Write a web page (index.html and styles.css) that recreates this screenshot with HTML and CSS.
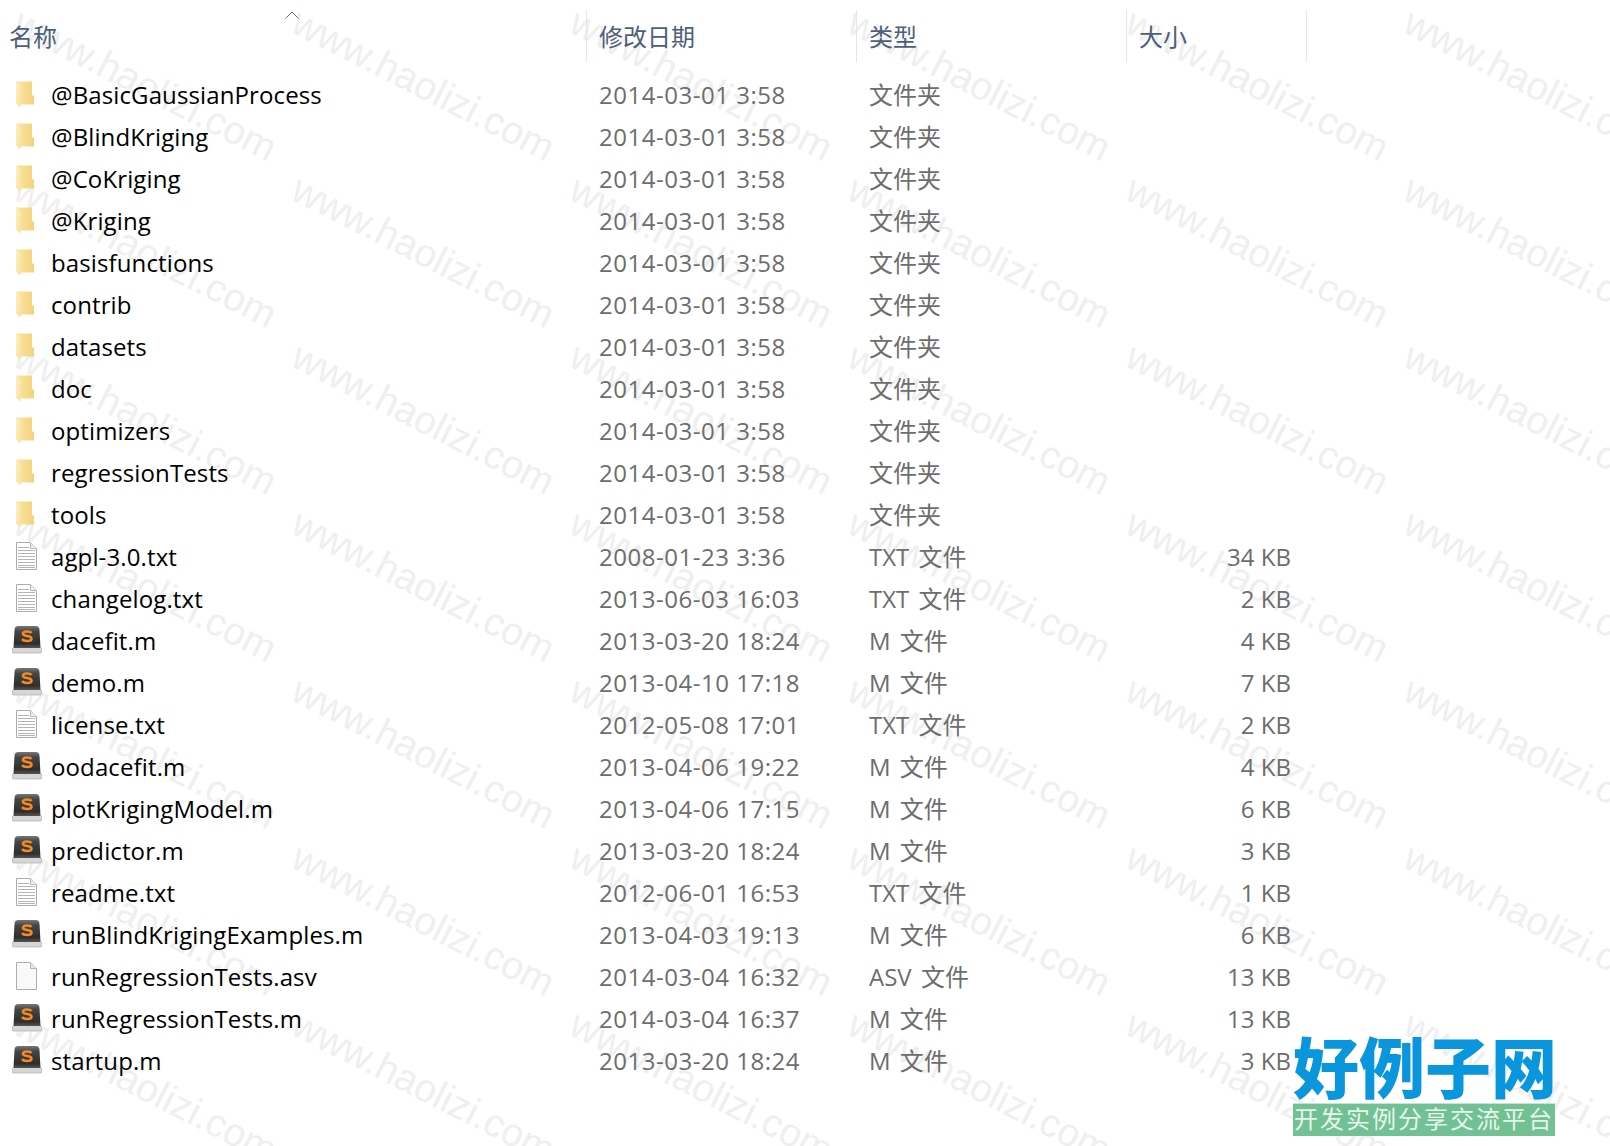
FILE: index.html
```html
<!DOCTYPE html>
<html lang="zh-CN">
<head>
  <meta charset="UTF-8">
  <title>dace</title>
  <link rel="stylesheet" href="styles.css">
</head>
<body>

  <svg class="defs" width="0" height="0">
    <defs>
      <linearGradient id="folderBack" x1="0" y1="0" x2="1" y2="0">
        <stop offset="0" stop-color="#fbe6a6"/>
        <stop offset="1" stop-color="#f3d27a"/>
      </linearGradient>
      <linearGradient id="folderFront" x1="0" y1="0" x2="1" y2="1">
        <stop offset="0" stop-color="#fdf0c4"/>
        <stop offset="1" stop-color="#f8e09a"/>
      </linearGradient>
      <linearGradient id="slBody" x1="0" y1="0" x2="0" y2="1">
        <stop offset="0" stop-color="#777"/>
        <stop offset=".25" stop-color="#444"/>
        <stop offset=".8" stop-color="#2e2e2e"/>
        <stop offset="1" stop-color="#555"/>
      </linearGradient>
      <symbol id="folder" viewBox="0 0 30 32">
        <path d="M4 2.500h16v14h2v9H8L4 22z" fill="url(#folderBack)"/>
        <path d="M4 2.500l5 4.500v19l-1 2.500-4-4z" fill="url(#folderFront)"/>
      </symbol>
      <symbol id="txt" viewBox="0 0 30 32">
        <path d="M4.500 1.500h14l6 6v21h-20z" fill="#fff" stroke="#adadad"/>
        <path d="M18.500 1.500v6h6" fill="#eee" stroke="#b8b8b8"/>
        <path d="M6 6.500h11M6 9.500h17M6 12.500h17M6 15.500h17M6 18.500h17M6 21.500h17M6 24.500h17M6 26.500h17" stroke="#b4b4b4" fill="none"/>
      </symbol>
      <symbol id="blank" viewBox="0 0 30 32">
        <path d="M4.500 1.500h14l6 6v21h-20z" fill="#f8f9fb" stroke="#adadad"/>
        <path d="M18.500 1.500v6h6" fill="#e6e6e6" stroke="#b8b8b8"/>
      </symbol>
      <symbol id="sublime" viewBox="0 0 30 32">
        <path d="M0 24l2-2h26l2 2v3l-1 1H1l-1-1z" fill="#d6d6d6" stroke="#a6a6a6" stroke-width=".6"/>
        <path d="M2.500 5q0-4 4-4h17q4 0 4 4l1 18H1.500z" fill="url(#slBody)"/>
        <path d="M19.500 8q-1-1.500-4.500-1.500-4 0-4 2.300 0 1.800 4 2.200 4.500.5 4.500 2.700 0 2.300-4.500 2.300-3.500 0-5-1.800" fill="none" stroke="#f58a20" stroke-width="2.600"/>
      </symbol>
    </defs>
  </svg>

  <div class="watermark">
    <span>www.haolizi.com</span><span>www.haolizi.com</span><span>www.haolizi.com</span><span>www.haolizi.com</span><span>www.haolizi.com</span><span>www.haolizi.com</span>
    <span>www.haolizi.com</span><span>www.haolizi.com</span><span>www.haolizi.com</span><span>www.haolizi.com</span><span>www.haolizi.com</span><span>www.haolizi.com</span>
    <span>www.haolizi.com</span><span>www.haolizi.com</span><span>www.haolizi.com</span><span>www.haolizi.com</span><span>www.haolizi.com</span><span>www.haolizi.com</span>
    <span>www.haolizi.com</span><span>www.haolizi.com</span><span>www.haolizi.com</span><span>www.haolizi.com</span><span>www.haolizi.com</span><span>www.haolizi.com</span>
    <span>www.haolizi.com</span><span>www.haolizi.com</span><span>www.haolizi.com</span><span>www.haolizi.com</span><span>www.haolizi.com</span><span>www.haolizi.com</span>
    <span>www.haolizi.com</span><span>www.haolizi.com</span><span>www.haolizi.com</span><span>www.haolizi.com</span><span>www.haolizi.com</span><span>www.haolizi.com</span>
    <span>www.haolizi.com</span><span>www.haolizi.com</span><span>www.haolizi.com</span><span>www.haolizi.com</span><span>www.haolizi.com</span><span>www.haolizi.com</span>
  </div>

  <div class="explorer">
    <div class="header">
      <div class="col-head col-name">名称<svg class="sort" width="14" height="8" viewBox="0 0 14 8"><path d="M.5 7.500L7 1l6.500 6.500" fill="none" stroke="#6d7680"/></svg></div>
      <div class="col-head">修改日期</div>
      <div class="col-head">类型</div>
      <div class="col-head">大小</div>
    </div>

    <div class="row"><div class="name"><svg class="icon"><use href="#folder"/></svg>@BasicGaussianProcess</div><div class="cell">2014-03-01 3:58</div><div class="cell type">文件夹</div><div class="size"></div></div>
    <div class="row"><div class="name"><svg class="icon"><use href="#folder"/></svg>@BlindKriging</div><div class="cell">2014-03-01 3:58</div><div class="cell type">文件夹</div><div class="size"></div></div>
    <div class="row"><div class="name"><svg class="icon"><use href="#folder"/></svg>@CoKriging</div><div class="cell">2014-03-01 3:58</div><div class="cell type">文件夹</div><div class="size"></div></div>
    <div class="row"><div class="name"><svg class="icon"><use href="#folder"/></svg>@Kriging</div><div class="cell">2014-03-01 3:58</div><div class="cell type">文件夹</div><div class="size"></div></div>
    <div class="row"><div class="name"><svg class="icon"><use href="#folder"/></svg>basisfunctions</div><div class="cell">2014-03-01 3:58</div><div class="cell type">文件夹</div><div class="size"></div></div>
    <div class="row"><div class="name"><svg class="icon"><use href="#folder"/></svg>contrib</div><div class="cell">2014-03-01 3:58</div><div class="cell type">文件夹</div><div class="size"></div></div>
    <div class="row"><div class="name"><svg class="icon"><use href="#folder"/></svg>datasets</div><div class="cell">2014-03-01 3:58</div><div class="cell type">文件夹</div><div class="size"></div></div>
    <div class="row"><div class="name"><svg class="icon"><use href="#folder"/></svg>doc</div><div class="cell">2014-03-01 3:58</div><div class="cell type">文件夹</div><div class="size"></div></div>
    <div class="row"><div class="name"><svg class="icon"><use href="#folder"/></svg>optimizers</div><div class="cell">2014-03-01 3:58</div><div class="cell type">文件夹</div><div class="size"></div></div>
    <div class="row"><div class="name"><svg class="icon"><use href="#folder"/></svg>regressionTests</div><div class="cell">2014-03-01 3:58</div><div class="cell type">文件夹</div><div class="size"></div></div>
    <div class="row"><div class="name"><svg class="icon"><use href="#folder"/></svg>tools</div><div class="cell">2014-03-01 3:58</div><div class="cell type">文件夹</div><div class="size"></div></div>
    <div class="row"><div class="name"><svg class="icon"><use href="#txt"/></svg>agpl-3.0.txt</div><div class="cell">2008-01-23 3:36</div><div class="cell type">TXT 文件</div><div class="size">34 KB</div></div>
    <div class="row"><div class="name"><svg class="icon"><use href="#txt"/></svg>changelog.txt</div><div class="cell">2013-06-03 16:03</div><div class="cell type">TXT 文件</div><div class="size">2 KB</div></div>
    <div class="row"><div class="name"><svg class="icon"><use href="#sublime"/></svg>dacefit.m</div><div class="cell">2013-03-20 18:24</div><div class="cell type">M 文件</div><div class="size">4 KB</div></div>
    <div class="row"><div class="name"><svg class="icon"><use href="#sublime"/></svg>demo.m</div><div class="cell">2013-04-10 17:18</div><div class="cell type">M 文件</div><div class="size">7 KB</div></div>
    <div class="row"><div class="name"><svg class="icon"><use href="#txt"/></svg>license.txt</div><div class="cell">2012-05-08 17:01</div><div class="cell type">TXT 文件</div><div class="size">2 KB</div></div>
    <div class="row"><div class="name"><svg class="icon"><use href="#sublime"/></svg>oodacefit.m</div><div class="cell">2013-04-06 19:22</div><div class="cell type">M 文件</div><div class="size">4 KB</div></div>
    <div class="row"><div class="name"><svg class="icon"><use href="#sublime"/></svg>plotKrigingModel.m</div><div class="cell">2013-04-06 17:15</div><div class="cell type">M 文件</div><div class="size">6 KB</div></div>
    <div class="row"><div class="name"><svg class="icon"><use href="#sublime"/></svg>predictor.m</div><div class="cell">2013-03-20 18:24</div><div class="cell type">M 文件</div><div class="size">3 KB</div></div>
    <div class="row"><div class="name"><svg class="icon"><use href="#txt"/></svg>readme.txt</div><div class="cell">2012-06-01 16:53</div><div class="cell type">TXT 文件</div><div class="size">1 KB</div></div>
    <div class="row"><div class="name"><svg class="icon"><use href="#sublime"/></svg>runBlindKrigingExamples.m</div><div class="cell">2013-04-03 19:13</div><div class="cell type">M 文件</div><div class="size">6 KB</div></div>
    <div class="row"><div class="name"><svg class="icon"><use href="#blank"/></svg>runRegressionTests.asv</div><div class="cell">2014-03-04 16:32</div><div class="cell type">ASV 文件</div><div class="size">13 KB</div></div>
    <div class="row"><div class="name"><svg class="icon"><use href="#sublime"/></svg>runRegressionTests.m</div><div class="cell">2014-03-04 16:37</div><div class="cell type">M 文件</div><div class="size">13 KB</div></div>
    <div class="row"><div class="name"><svg class="icon"><use href="#sublime"/></svg>startup.m</div><div class="cell">2013-03-20 18:24</div><div class="cell type">M 文件</div><div class="size">3 KB</div></div>
  </div>

  <div class="logo">
    <div class="logo-title">好例子网</div>
    <div class="logo-sub">开发实例分享交流平台</div>
  </div>

</body>
</html>
```

FILE: styles.css
```css
html, body {
  margin: 0;
  height: 100%;
}

body {
  position: relative;
  overflow: hidden;
  background-color: #fff;
  color: #000;
  font-family: "Open Sans", "Noto Sans CJK SC", sans-serif;
  font-size: 24px;
}

.defs {
  position: absolute;
}

.watermark {
  position: absolute;
  top: 0;
  left: 0;
  right: 0;
  bottom: 0;
  overflow: hidden;
  padding: 0 0 0 27px;
  display: grid;
  grid-template-columns: repeat(6, 278px);
  grid-auto-rows: 167px;
}

.watermark span {
  font-family: "Liberation Sans", sans-serif;
  font-size: 39px;
  color: #efefef;
  white-space: nowrap;
  height: 0;
  transform: rotate(27deg);
  transform-origin: left top;
}

.explorer {
  position: relative;
}

.header {
  display: grid;
  grid-template-columns: 586px 270px 270px 181px;
  height: 74px;
}

.col-head {
  height: 52px;
  margin-top: 10px;
  padding-left: 12px;
  padding-top: 10px;
  box-sizing: border-box;
  border-left: 1px solid #e5e5e5;
  color: #4c607a;
  line-height: 34px;
}

.col-head:last-child {
  border-right: 1px solid #e5e5e5;
}

.col-name {
  position: relative;
  border-left: none;
  padding-left: 9px;
}

.sort {
  position: absolute;
  left: 285px;
  top: 1px;
}

.row {
  display: grid;
  grid-template-columns: 587px 270px 270px 179px;
  height: 42px;
  align-items: center;
  line-height: 42px;
}

.name {
  display: flex;
  align-items: center;
  letter-spacing: 0.12px;
  white-space: nowrap;
}

.icon {
  width: 30px;
  height: 32px;
  margin-left: 12px;
  margin-right: 9px;
  flex: none;
}

.cell {
  padding-left: 12px;
  color: #6d6d6d;
  letter-spacing: 0.52px;
}

.type {
  letter-spacing: 0;
  word-spacing: 3px;
}

.size {
  padding-right: 15px;
  text-align: right;
  color: #6d6d6d;
}

.logo {
  position: absolute;
  left: 1293px;
  top: 1026px;
  width: 262px;
}

.logo-title {
  font-family: "Noto Sans CJK SC", sans-serif;
  font-weight: 900;
  font-size: 66px;
  line-height: 76px;
  color: #0a96dc;
  white-space: nowrap;
}

.logo-sub {
  margin-top: 1px;
  height: 33px;
  background-color: #72c194;
  border-top: 1px solid #c5e4d2;
  box-sizing: border-box;
  font-family: "Noto Sans CJK SC", sans-serif;
  font-size: 24px;
  line-height: 27px;
  letter-spacing: 2px;
  color: #e6f5ec;
  text-align: center;
  white-space: nowrap;
  overflow: hidden;
}
```
